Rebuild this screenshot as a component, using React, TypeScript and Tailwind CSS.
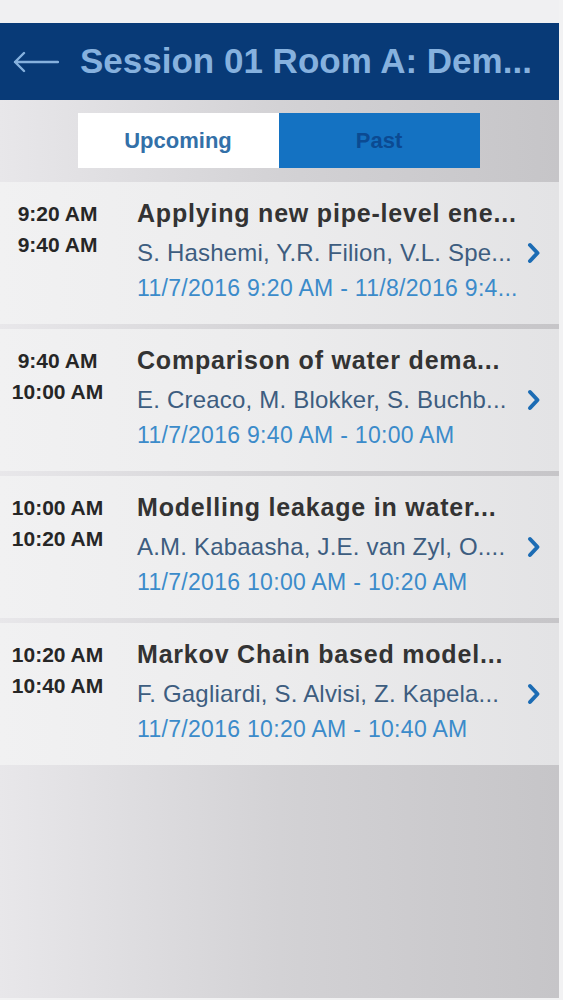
import { useState } from "react";

type Talk = {
  start: string;
  end: string;
  title: string;
  authors: string;
  when: string;
};

const talks: Talk[] = [
  {
    start: "9:20 AM",
    end: "9:40 AM",
    title: "Applying new pipe-level ene...",
    authors: "S. Hashemi, Y.R. Filion, V.L. Spe...",
    when: "11/7/2016 9:20 AM - 11/8/2016 9:4...",
  },
  {
    start: "9:40 AM",
    end: "10:00 AM",
    title: "Comparison of water dema...",
    authors: "E. Creaco, M. Blokker, S. Buchb...",
    when: "11/7/2016 9:40 AM - 10:00 AM",
  },
  {
    start: "10:00 AM",
    end: "10:20 AM",
    title: "Modelling leakage in water...",
    authors: "A.M. Kabaasha, J.E. van Zyl, O....",
    when: "11/7/2016 10:00 AM - 10:20 AM",
  },
  {
    start: "10:20 AM",
    end: "10:40 AM",
    title: "Markov Chain based model...",
    authors: "F. Gagliardi, S. Alvisi, Z. Kapela...",
    when: "11/7/2016 10:20 AM - 10:40 AM",
  },
];

const BackArrow = () => (
  <svg width="46" height="24" viewBox="0 0 46 24" fill="none">
    <path
      d="M45 12H2M11 3L2 12L11 21"
      stroke="#86b1de"
      strokeWidth="2.4"
      strokeLinecap="round"
      strokeLinejoin="round"
    />
  </svg>
);

const Chevron = () => (
  <svg width="16" height="22" viewBox="0 0 16 22" fill="none">
    <path
      d="M4 3L11.5 11L4 19"
      stroke="#1c6cb4"
      strokeWidth="4"
      strokeLinecap="round"
      strokeLinejoin="round"
    />
  </svg>
);

const TalkRow = ({ talk }: { talk: Talk }) => {
  return (
    <div className="flex h-[142px] bg-linear-to-r from-[#f1f1f2] via-[#ececed] to-[#e3e3e5]">
      <div className="w-[115px] shrink-0 pt-[16px] text-center text-[21px] font-bold leading-[31px] text-[#262626]">
        <div>{talk.start}</div>
        <div>{talk.end}</div>
      </div>
      <div className="ml-[22px] flex-1 pt-[16px] whitespace-nowrap">
        <div className="text-[25px] font-bold leading-[30px] tracking-[0.8px] text-[#333333]">
          {talk.title}
        </div>
        <div className="mt-[10px] text-[24px] leading-[30px] tracking-[0.2px] text-[#3d5d80]">
          {talk.authors}
        </div>
        <div className="mt-[5px] text-[23px] leading-[30px] tracking-[0.3px] text-[#3b8bca]">
          {talk.when}
        </div>
      </div>
      <div className="flex w-[36px] shrink-0 items-center pl-[3px]">
        <Chevron />
      </div>
    </div>
  );
};

export default function App() {
  const [tab, setTab] = useState<"upcoming" | "past">("past");

  return (
    <div className="flex h-[1000px] w-full bg-[#f2f2f3] font-['Liberation_Sans',Arial,sans-serif]">
      <div className="flex h-[998px] w-[559px] flex-col">
        <div className="h-[23px] bg-[#f0f0f2]" />
        <div className="flex h-[77px] items-center bg-[#083a77] pl-[13px]">
          <BackArrow />
          <div className="ml-[21px] text-[35px] font-bold text-[#86b1de]">
            Session 01 Room A: Dem...
          </div>
        </div>
        <div className="flex-1 bg-linear-to-r from-[#e8e7ea] via-[#d3d2d5] to-[#c6c5c8]">
          <div className="flex justify-center pt-[13px] pb-[14px]">
            <div className="flex h-[55px] w-[402px] translate-x-[-1px]">
              <button
                onClick={() => setTab("upcoming")}
                className="flex-1 bg-white text-[22px] font-bold text-[#3370a8]"
              >
                Upcoming
              </button>
              <button
                onClick={() => setTab("past")}
                className="flex-1 bg-[#1472c2] text-[22px] font-bold text-[#0b4a92]"
              >
                Past
              </button>
            </div>
          </div>
          <div className="flex flex-col gap-[5px]">
            {tab === "past" || tab === "upcoming"
              ? talks.map((t) => <TalkRow key={t.title} talk={t} />)
              : null}
          </div>
        </div>
      </div>
      <div className="flex-1" />
    </div>
  );
}
